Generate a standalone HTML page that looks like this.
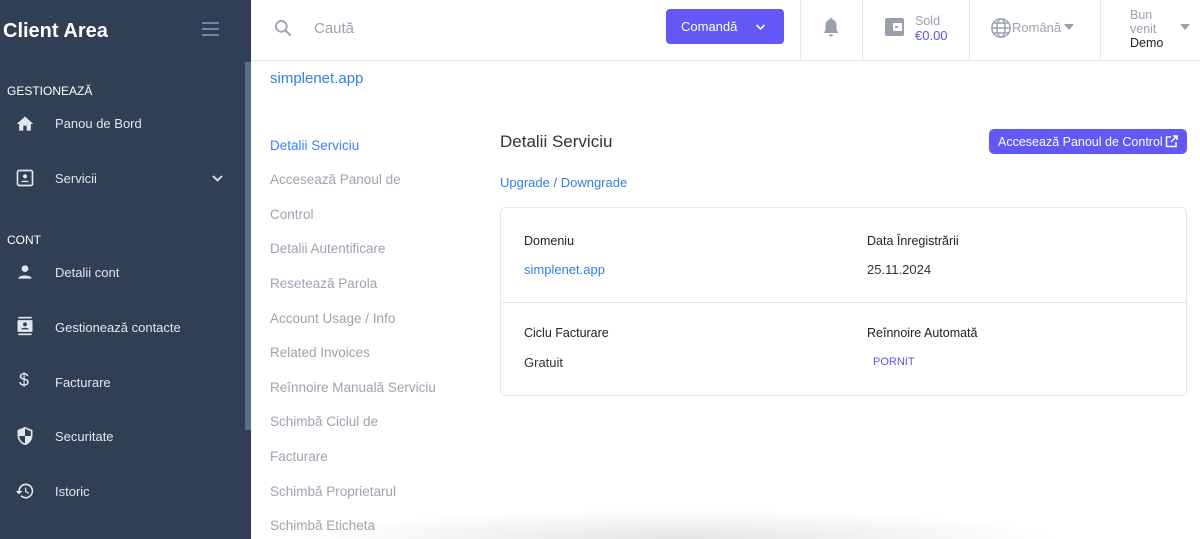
<!DOCTYPE html>
<html style="overflow:hidden;width:1200px;height:539px"><head><meta charset="utf-8"><style>
*{box-sizing:border-box;margin:0;padding:0}
body{width:1200px;height:539px;overflow:hidden;background:#fff;font-family:"Liberation Sans",sans-serif;position:relative}
.sb{position:absolute;left:0;top:0;width:251px;height:539px;background:#313f55;color:#e6eaf0}
.sb .t{position:absolute;left:3px;top:20px;font-size:20px;font-weight:bold;color:#fff}
.sb .ham{position:absolute;left:202px;top:22px;width:17px}
.sb .ham i{display:block;height:2px;background:#6d86a8;margin-bottom:4px}
.sec{position:absolute;left:7px;font-size:12px;color:#fff}
.it{position:absolute;left:55px;font-size:13px;color:#e2e6ec}
.ic{position:absolute;left:15px;width:20px;height:20px}
.scr{position:absolute;left:245px;top:62px;width:6px;height:368px;background:#5c6e89}
.hd{position:absolute;left:251px;top:0;right:0;height:61px;border-bottom:1px solid #e2e8f0}
.sep{position:absolute;top:0;width:1px;height:61px;background:#e2e8f0}
.btn{position:absolute;left:666px;top:9px;width:118px;height:35px;background:#6158f5;border-radius:4px;color:#fff;font-size:13px;padding:10px 0 0 15px}
.menu{position:absolute;left:270px;font-size:13.5px;color:#9ca3af}
.card{position:absolute;left:500px;top:207px;width:687px;height:189px;border:1px solid #e5e7eb;border-radius:5px}
.lbl{position:absolute;font-size:12.5px;color:#222}
.val{position:absolute;font-size:13px;color:#333}
</style></head><body>
<div class="sb">
<div class="t">Client Area</div>
<div class="ham"><i></i><i></i><i></i></div>
<div class="sec" style="top:84px">GESTIONEAZĂ</div>
<svg class="ic" style="top:114px" viewBox="0 0 24 24"><path d="M10 20v-6h4v6h5v-8h3L12 3 2 12h3v8z" fill="#e2e6ec"/></svg>
<div class="it" style="top:116px">Panou de Bord</div>
<svg class="ic" style="top:168px" viewBox="0 0 24 24"><rect x="3" y="3" width="18" height="18" rx="2" fill="none" stroke="#e2e6ec" stroke-width="2"/><circle cx="12" cy="10" r="2.5" fill="#e2e6ec"/><path d="M7 17c0-2.5 10-2.5 10 0z" fill="#e2e6ec"/></svg>
<div class="it" style="top:171px">Servicii</div>
<svg style="position:absolute;left:211px;top:173px" width="13" height="10" viewBox="0 0 13 10"><path d="M2 3l4.5 4.5L11 3" fill="none" stroke="#e2e6ec" stroke-width="1.8"/></svg>
<div class="sec" style="top:233px">CONT</div>
<svg class="ic" style="top:262px" viewBox="0 0 24 24"><circle cx="12" cy="8" r="4" fill="#e2e6ec"/><path d="M4 20c0-5 16-5 16 0z" fill="#e2e6ec"/></svg>
<div class="it" style="top:265px">Detalii cont</div>
<svg class="ic" style="top:316px" viewBox="0 0 24 24"><rect x="4" y="1" width="16" height="2" fill="#e2e6ec"/><rect x="4" y="21" width="16" height="2" fill="#e2e6ec"/><rect x="3" y="5" width="18" height="14" rx="1" fill="#e2e6ec"/><circle cx="12" cy="10" r="2.3" fill="#313f55"/><path d="M7.5 16c0-2.5 9-2.5 9 0z" fill="#313f55"/></svg>
<div class="it" style="top:320px">Gestionează contacte</div>
<div style="position:absolute;left:19px;top:370px;font-size:18px;color:#e2e6ec">$</div>
<div class="it" style="top:375px">Facturare</div>
<svg class="ic" style="top:426px" viewBox="0 0 24 24"><path d="M12 1L3 5v6c0 5.5 3.8 10.7 9 12 5.2-1.3 9-6.5 9-12V5z" fill="#e2e6ec"/><path d="M12 12V3.2L19 6.3V12zM12 12H5c.5 4 3.2 7.8 7 9z" fill="#313f55"/></svg>
<div class="it" style="top:429px">Securitate</div>
<svg class="ic" style="top:481px" viewBox="0 0 24 24"><path d="M13 3a9 9 0 0 0-9 9H1l4 4 4-4H6a7 7 0 1 1 2 5l-1.4 1.4A9 9 0 1 0 13 3zm-1 5v5l4.3 2.5.7-1.2-3.5-2.1V8z" fill="#e2e6ec"/></svg>
<div class="it" style="top:484px">Istoric</div>
<div class="scr"></div>
</div>
<div class="hd">
<svg style="position:absolute;left:22px;top:18px" width="20" height="20" viewBox="0 0 24 24"><circle cx="10" cy="10" r="6.5" fill="none" stroke="#9ca3af" stroke-width="2.2"/><path d="M15 15l6 6" stroke="#9ca3af" stroke-width="2.4"/></svg>
<div style="position:absolute;left:63px;top:20px;font-size:15px;color:#9ca3af">Caută</div>
</div>
<div class="btn">Comandă <svg style="position:absolute;left:89px;top:14px" width="11" height="8" viewBox="0 0 11 8"><path d="M1.5 2l4 4 4-4" fill="none" stroke="#fff" stroke-width="1.6"/></svg></div>
<div class="sep" style="left:800px"></div><div class="sep" style="left:862px"></div><div class="sep" style="left:969px"></div><div class="sep" style="left:1100px"></div>
<svg style="position:absolute;left:822px;top:17px" width="18" height="21" viewBox="0 0 18 21"><path d="M9 1c-1 0-1.5.7-1.5 1.5C5 3.3 3.5 5.5 3.5 8v5L1.5 16h15l-2-3V8c0-2.5-1.5-4.7-4-5.5C10.5 1.7 10 1 9 1zM7 17.5a2 2 0 0 0 4 0z" fill="#9aa0ab"/></svg>
<svg style="position:absolute;left:885px;top:18px" width="20" height="18" viewBox="0 0 20 18"><rect x="0" y="0" width="19" height="18" rx="2" fill="#9aa0ab"/><rect x="8" y="5" width="9" height="8" rx="1" fill="#fff"/><rect x="10" y="8" width="3" height="2" fill="#9aa0ab"/></svg>
<div style="position:absolute;left:915px;top:14px;font-size:12.5px;color:#9ca3af">Sold</div>
<div style="position:absolute;left:915px;top:28px;font-size:13px;color:#5b54f0">€0.00</div>
<svg style="position:absolute;left:990px;top:17px" width="22" height="22" viewBox="0 0 24 24" fill="none" stroke="#9aa0ab" stroke-width="1.6"><circle cx="12" cy="12" r="10"/><ellipse cx="12" cy="12" rx="4.5" ry="10"/><path d="M2 12h20M4 6.5h16M4 17.5h16"/></svg>
<div style="position:absolute;left:1012px;top:20px;font-size:13px;color:#9ca3af">Română</div>
<svg style="position:absolute;left:1064px;top:24px" width="10" height="6"><path d="M0 0h10L5 6z" fill="#9aa0ab"/></svg>
<div style="position:absolute;left:1130px;top:8px;font-size:12.5px;color:#9ca3af;line-height:14px">Bun<br>venit<br><span style="color:#222">Demo</span></div>
<svg style="position:absolute;left:1180px;top:24px" width="10" height="6"><path d="M0 0h10L5 6z" fill="#9aa0ab"/></svg>
<div style="position:absolute;left:270px;top:70px;font-size:15px;color:#2f7fe8">simplenet.app</div>
<div class="menu" style="top:138px;color:#3b82f6">Detalii Serviciu</div>
<div class="menu" style="top:172px">Accesează Panoul de</div>
<div class="menu" style="top:207px">Control</div>
<div class="menu" style="top:241px">Detalii Autentificare</div>
<div class="menu" style="top:276px">Resetează Parola</div>
<div class="menu" style="top:311px">Account Usage / Info</div>
<div class="menu" style="top:345px">Related Invoices</div>
<div class="menu" style="top:380px">Reînnoire Manuală Serviciu</div>
<div class="menu" style="top:414px">Schimbă Ciclul de</div>
<div class="menu" style="top:449px">Facturare</div>
<div class="menu" style="top:484px">Schimbă Proprietarul</div>
<div class="menu" style="top:518px">Schimbă Eticheta</div>
<div style="position:absolute;left:500px;top:132px;font-size:17px;color:#333">Detalii Serviciu</div>
<div style="position:absolute;left:989px;top:129px;width:198px;height:25px;background:#6158f5;border-radius:5px;color:#fff;font-size:12.5px;padding:6px 0 0 9px">Accesează Panoul de Control
<svg style="position:absolute;left:176px;top:6px" width="13" height="13" viewBox="0 0 13 13" fill="none" stroke="#fff" stroke-width="1.5"><path d="M6 2H1.5v9.5H11V7M8 1h4v4M12 1L6 7"/></svg></div>
<div style="position:absolute;left:500px;top:175px;font-size:13px;color:#2f7fe8">Upgrade / Downgrade</div>
<div class="card">
<div class="lbl" style="left:23px;top:26px">Domeniu</div>
<div class="lbl" style="left:366px;top:26px">Data Înregistrării</div>
<div class="val" style="left:23px;top:54px;color:#2f7fe8">simplenet.app</div>
<div class="val" style="left:366px;top:54px">25.11.2024</div>
<div style="position:absolute;left:0;right:0;top:94px;height:1px;background:#e5e7eb"></div>
<div class="lbl" style="left:23px;top:118px">Ciclu Facturare</div>
<div class="lbl" style="left:366px;top:118px">Reînnoire Automată</div>
<div class="val" style="left:23px;top:147px">Gratuit</div>
<div style="position:absolute;left:372px;top:148px;font-size:11px;color:#5b54f0">PORNIT</div>
</div>
<div style="position:absolute;left:300px;top:509px;width:760px;height:30px;background:radial-gradient(ellipse 50% 100% at 50% 100%,rgba(0,0,0,0.1),rgba(0,0,0,0))"></div>
</body></html>
